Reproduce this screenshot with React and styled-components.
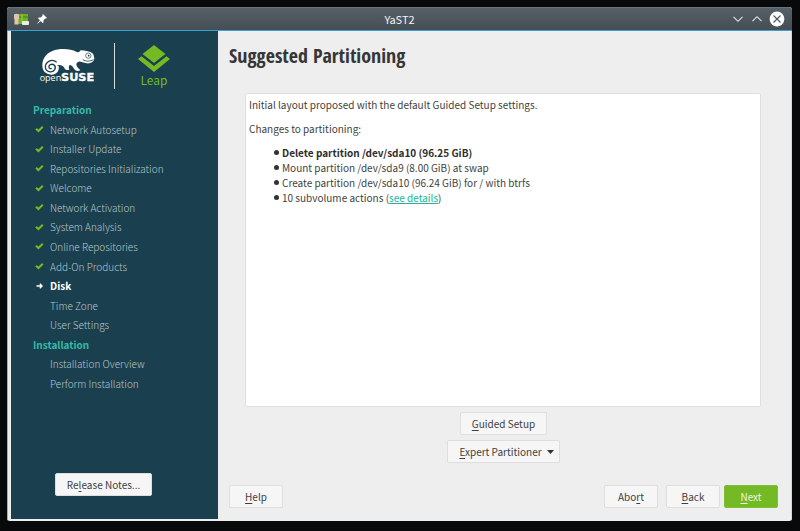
import React from "react";
import styled, { createGlobalStyle, css } from "styled-components";

const sans = `"Noto Sans CJK SC", "Open Sans", sans-serif`;

const GlobalStyle = createGlobalStyle`
  *, *::before, *::after { box-sizing: border-box; }
  body { margin: 0; background: #08090b; font: 400 10px/15px ${sans}; color: #3f3f3f; }
  ul { list-style: none; margin: 0; padding: 0; }
  p { margin: 0; }
`;

const Desktop = styled.div`
  display: flex;
  min-height: 100vh;
  padding: 7px 8px 10px 7px;
`;

const Window = styled.div`
  flex: 1;
  display: flex;
  flex-direction: column;
  border-radius: 3px;
  overflow: hidden;
  background: #eeeeee;
`;

const TitleBar = styled.header`
  display: grid;
  grid-template-columns: 1fr auto 1fr;
  align-items: center;
  height: 24px;
  padding: 0 7px;
  font-size: 11px;
  color: #f2f4f5;
  background: linear-gradient(#576067, #444e55);
  border-top: 1px solid #6a7379;
  border-bottom: 1px solid #3d9fd3;
`;

const TitleIcons = styled.div`
  display: flex;
  align-items: center;
  gap: 7px;
`;

const WindowControls = styled.div`
  display: flex;
  justify-content: flex-end;
  align-items: center;
  gap: 5px;
`;

const WindowButton = styled.button`
  display: flex;
  padding: 0;
  border: 0;
  background: none;
`;

const Body = styled.div`
  flex: 1;
  display: flex;
  border-left: 1px solid #a9adb0;
  border-right: 1px solid #d4d6d7;
`;

const Sidebar = styled.aside`
  flex: 0 0 207px;
  display: flex;
  flex-direction: column;
  margin: 0 0 2px 3px;
  background: #1a3f4e;
`;

const Brand = styled.div`
  display: flex;
  align-items: center;
  height: 69px;
  padding-left: 28px;
`;

const Divider = styled.div`
  width: 1px;
  height: 46px;
  margin: 0 23px 0 17px;
  background: #d3dbde;
`;

const Leap = styled.div`
  display: flex;
  flex-direction: column;
  align-items: center;
  color: #73ba25;
  font-size: 12px;
`;

const Steps = styled.ul`
  flex: 1;
  display: grid;
  grid-auto-rows: 1fr;
  align-items: center;
`;

const Phase = styled.li`
  padding-left: 22px;
  font-weight: 700;
  color: #35b9a7;
`;

const Step = styled.li`
  display: flex;
  align-items: center;
  padding-left: 24px;
  font-weight: 300;
  color: #b9c7cc;
  ${(p) => p.$current && css`font-weight: 700; color: #fff;`}
`;

const StepMark = styled.span`
  display: flex;
  width: 15px;
`;

const SidebarFooter = styled.div`
  display: flex;
  justify-content: center;
  align-items: flex-end;
  height: 126px;
  padding: 0 22px 23px 0;
`;

const Button = styled.button`
  display: inline-flex;
  align-items: center;
  justify-content: center;
  gap: 5px;
  height: 23px;
  min-width: ${(p) => (p.$wide ? "0" : "54px")};
  padding: 0 ${(p) => (p.$menu ? "5px" : "11px")} 0 11px;
  font: 400 10px/15px ${sans};
  color: #3f3f3f;
  background: #f6f6f6;
  border: 1px solid #dedede;
  border-radius: 2px;
  ${(p) => p.$primary && css`color: #eef7e4; background: #73ba25; border-color: #7fc136;`}
`;

const Key = styled.span`
  text-decoration: underline;
  text-underline-offset: 2px;
`;

const Content = styled.main`
  flex: 1;
  display: flex;
  flex-direction: column;
  padding: 11px 13px 13px 11px;
`;

const Title = styled.h1`
  margin: 0;
  font: 700 20px/28px "Open Sans Condensed", "Roboto Condensed", "Liberation Sans Narrow", ${sans};
  color: #363636;
`;

const Proposal = styled.section`
  flex: 1;
  margin: 23px 17px 5px 16px;
  padding: 3px;
  background: #fff;
  border: 1px solid #dfdfdf;
  border-radius: 2px;
`;

const Paragraph = styled.p`
  margin-bottom: 9px;
`;

const Changes = styled.ul`
  padding-left: 25px;
`;

const Change = styled.li`
  display: flex;
  align-items: center;
  gap: 3px;
  height: 15px;
  font-weight: ${(p) => (p.$strong ? 700 : 400)};
  color: ${(p) => (p.$strong ? "#2e2e2e" : "inherit")};
  &::before {
    content: "";
    width: 5px;
    height: 5px;
    border-radius: 50%;
    background: #333;
  }
`;

const Link = styled.a`
  color: #21b49b;
`;

const Setup = styled.div`
  display: flex;
  flex-direction: column;
  align-items: center;
  gap: 5px;
`;

const Footer = styled.footer`
  display: flex;
  gap: 8px;
  margin-top: 22px;
`;

const Push = styled.div`
  flex: 1;
`;

const Next = styled.div`
  display: flex;
  gap: 4px;
`;

const AppIcon = () => (
  <svg width="16" height="13" viewBox="0 0 16 13">
    <rect x="4" y="1" width="10" height="10" fill="#6fb01f" />
    <path d="M5 4h9.500" stroke="#477f18" />
    <rect x="7" y="1" width="2" height="10" fill="#7cc02b" />
    <path d="M0 1.500q2-1.500 5 0v4l-.500 1v5H.5v-5L0 5.500z" fill="#dfc4b4" />
    <rect x="8" y="8" width="7" height="4" rx="1" fill="#e9eeea" />
  </svg>
);

const PinIcon = () => (
  <svg width="10" height="10" viewBox="0 0 10 10">
    <path d="M6 0l4 4-1 .6-.8-.1L6.4 6.400l.1 2L5.700 9 3.700 7 .5 9.800.2 9.500 3 6.300 1 4.300l.7-.8 2 .1L5.500 1.800 5.400.8z" fill="#fff" />
  </svg>
);

const Chevron = ({ up }) => (
  <svg width="14" height="14" viewBox="0 0 14 14" fill="none" stroke="#e3e6e8" strokeWidth="1.1">
    <path d={up ? "M2.500 9.200L7 4.700l4.500 4.500" : "M2.500 4.800L7 9.300l4.500-4.500"} />
  </svg>
);

const CloseIcon = () => (
  <svg width="16" height="16" viewBox="0 0 16 16">
    <circle cx="8" cy="8" r="7.400" fill="#fff" />
    <path d="M4.500 4.500l7 7m0-7l-7 7" stroke="#4b555c" strokeWidth="1.100" />
  </svg>
);

const OpenSuseLogo = () => (
  <svg width="58" height="38" viewBox="118 138 174 114" role="img" aria-label="openSUSE">
    <path
      fill="#fff"
      d="M128 196C127 176 137 158 158 150C178 142 211 142 230 152C235 155 239 154 243 148C257 149 272 151 280 158C283 163 284 171 284 175C281 184 273 188 261 187C250 186 243 181 237 182C230 184 229 189 231 194C235 202 240 204 242 208C237 211 230 211 226 207C220 200 217 192 211 192C206 194 207 201 209 207H199C193 202 193 196 188 194C181 191 176 192 172 193L177 195C180 211 169 222 154 221C139 220 129 211 128 196Z"
    />
    <path
      d="M171 184C157 171 137 183 137 198C138 213 157 218 165 206C171 195 161 187 152 191C144 196 148 206 156 202"
      fill="none"
      stroke="#1a3f4e"
      strokeWidth="4"
    />
    <circle cx="266" cy="164" r="8" fill="#fff" stroke="#1a3f4e" strokeWidth="2" />
    <circle cx="267" cy="164" r="2.500" fill="#1a3f4e" />
    <path d="M249 175C258 183 271 181 282 176" fill="none" stroke="#1a3f4e" strokeWidth="2.500" />
    <text x="120" y="241" fontFamily="Open Sans" fontSize="27" fill="#fff">open</text>
    <text x="184" y="241" fontFamily="DejaVu Sans" fontSize="34" fontWeight="700" fill="#fff" stroke="#fff">SUSE</text>
  </svg>
);

const LeapIcon = () => (
  <svg width="32" height="27" viewBox="0 0 32 27" fill="#73ba25">
    <path d="M16 0l11.500 9L16 18 4.500 9z" />
    <path d="M0 14l3.500-2.700L16 21l12.500-9.700L32 14 16 27z" />
  </svg>
);

const CheckMark = () => (
  <svg width="9" height="8" viewBox="0 0 9 8" fill="none" stroke="#73ba25" strokeWidth="2">
    <path d="M1 3.700l2.400 2.300L7.800 1.700" />
  </svg>
);

const ArrowMark = () => (
  <svg width="9" height="8" viewBox="0 0 9 8" fill="none" stroke="#fff" strokeWidth="1.300">
    <path d="M1.500 4H7M4.800 1.700L7.100 4 4.800 6.300" />
  </svg>
);

const Caret = () => (
  <svg width="7" height="4" viewBox="0 0 7 4" fill="#333">
    <path d="M0 0h7L3.500 4z" />
  </svg>
);

const phases = [
  {
    name: "Preparation",
    steps: [
      ["Network Autosetup", "done"],
      ["Installer Update", "done"],
      ["Repositories Initialization", "done"],
      ["Welcome", "done"],
      ["Network Activation", "done"],
      ["System Analysis", "done"],
      ["Online Repositories", "done"],
      ["Add-On Products", "done"],
      ["Disk", "current"],
      ["Time Zone", "todo"],
      ["User Settings", "todo"],
    ],
  },
  {
    name: "Installation",
    steps: [
      ["Installation Overview", "todo"],
      ["Perform Installation", "todo"],
    ],
  },
];

export default function App() {
  return (
    <>
      <GlobalStyle />
      <Desktop>
        <Window>
          <TitleBar>
            <TitleIcons><AppIcon /><PinIcon /></TitleIcons>
            <span>YaST2</span>
            <WindowControls>
              <WindowButton aria-label="Minimize"><Chevron /></WindowButton>
              <WindowButton aria-label="Maximize"><Chevron up /></WindowButton>
              <WindowButton aria-label="Close"><CloseIcon /></WindowButton>
            </WindowControls>
          </TitleBar>
          <Body>
            <Sidebar>
              <Brand>
                <OpenSuseLogo />
                <Divider />
                <Leap><LeapIcon />Leap</Leap>
              </Brand>
              <Steps>
                {phases.map((phase) => (
                  <React.Fragment key={phase.name}>
                    <Phase>{phase.name}</Phase>
                    {phase.steps.map(([label, state]) => (
                      <Step key={label} $current={state === "current"}>
                        <StepMark>
                          {state === "done" && <CheckMark />}
                          {state === "current" && <ArrowMark />}
                        </StepMark>
                        {label}
                      </Step>
                    ))}
                  </React.Fragment>
                ))}
              </Steps>
              <SidebarFooter>
                <Button $wide><span>Re<Key>l</Key>ease Notes...</span></Button>
              </SidebarFooter>
            </Sidebar>
            <Content>
              <Title>Suggested Partitioning</Title>
              <Proposal>
                <Paragraph>Initial layout proposed with the default Guided Setup settings.</Paragraph>
                <Paragraph>Changes to partitioning:</Paragraph>
                <Changes>
                  <Change $strong>Delete partition /dev/sda10 (96.25 GiB)</Change>
                  <Change>Mount partition /dev/sda9 (8.00 GiB) at swap</Change>
                  <Change>Create partition /dev/sda10 (96.24 GiB) for / with btrfs</Change>
                  <Change><span>10 subvolume actions (<Link href="#details">see details</Link>)</span></Change>
                </Changes>
              </Proposal>
              <Setup>
                <Button $wide><span><Key>G</Key>uided Setup</span></Button>
                <Button $wide $menu><span><Key>E</Key>xpert Partitioner</span><Caret /></Button>
              </Setup>
              <Footer>
                <Button><span><Key>H</Key>elp</span></Button>
                <Push />
                <Button><span>Abo<Key>r</Key>t</span></Button>
                <Next>
                  <Button><span><Key>B</Key>ack</span></Button>
                  <Button $primary><span><Key>N</Key>ext</span></Button>
                </Next>
              </Footer>
            </Content>
          </Body>
        </Window>
      </Desktop>
    </>
  );
}
